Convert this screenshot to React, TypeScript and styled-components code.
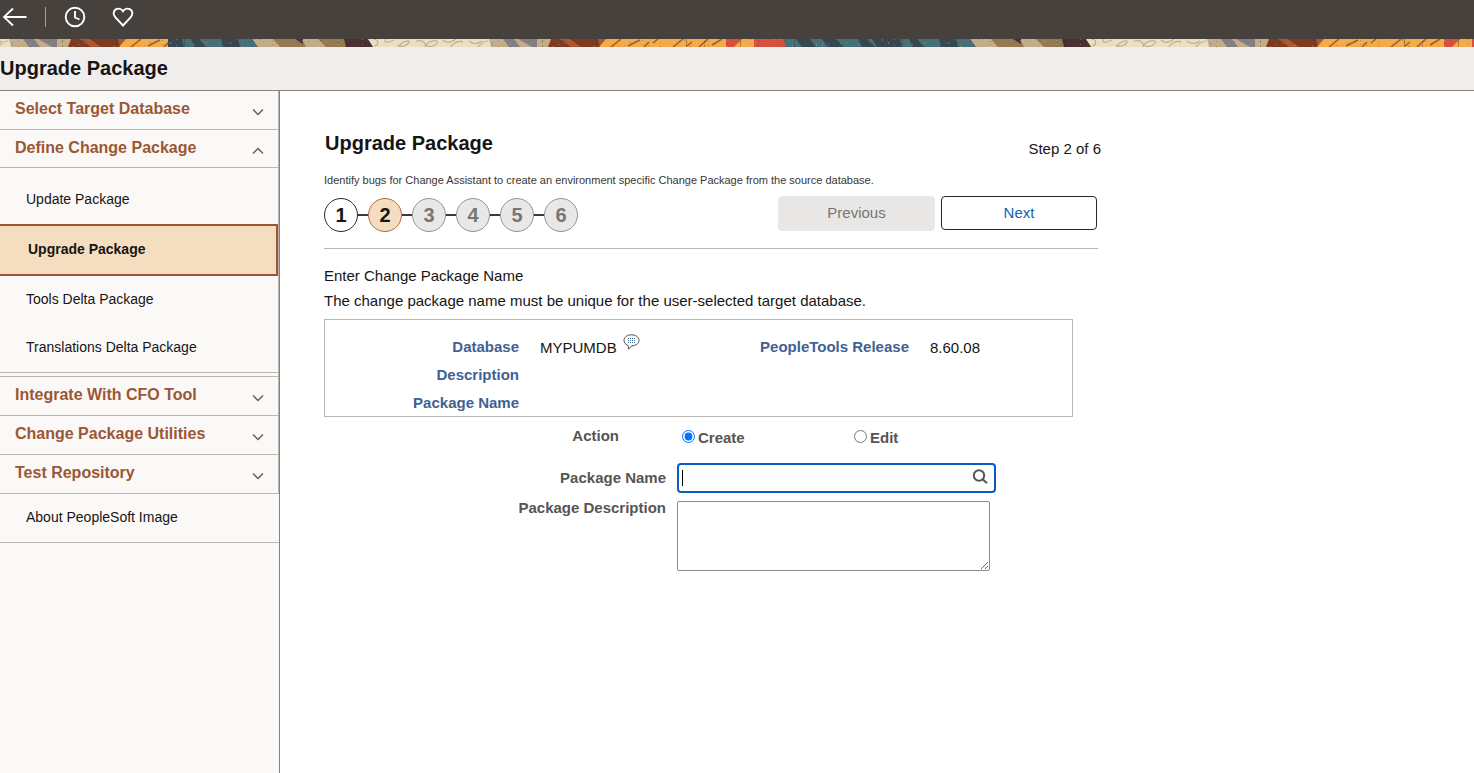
import React from "react";
import styled, { createGlobalStyle } from "styled-components";

const GlobalStyle = createGlobalStyle`
  *, *::before, *::after { box-sizing: border-box; }
  html, body, #root { min-height: 100vh; }
  body {
    margin: 0;
    background: #fff;
    color: #161513;
    font-family: "Liberation Sans", Arial, Helvetica, sans-serif;
    font-size: 15px;
  }
  h1, h2, p, ul, ol, dl, dd { margin: 0; padding: 0; }
  ul, ol { list-style: none; }
  button, input, textarea { font: inherit; }
`;

const Page = styled.div`
  display: flex;
  flex-direction: column;
  min-height: 100vh;
`;

const TopBar = styled.header`
  display: flex;
  align-items: center;
  height: 39px;
  padding: 0 2px 5px;
  background: #47413d;
`;

const IconButton = styled.button`
  display: flex;
  padding: 0;
  border: 0;
  background: none;
  color: #fff;
  cursor: pointer;
`;

const TopDivider = styled.span`
  width: 1px;
  height: 20px;
  margin: 0 18px;
  background: #a39e99;
`;

const TopIcons = styled.div`
  display: flex;
  gap: 26px;
`;

const Banner = styled.svg`
  display: block;
  width: 100%;
  height: 8px;
`;

const PageHeader = styled.div`
  height: 44px;
  border-bottom: 1px solid #8b8580;
  background: #f0eeec;
`;

const PageTitle = styled.h1`
  font-size: 20px;
  line-height: 43px;
`;

const Body = styled.div`
  display: flex;
  flex: 1;
`;

const Sidebar = styled.nav`
  flex: 0 0 280px;
  border-right: 1px solid #85817d;
  background: #fbf9f8;
`;

const Accordion = styled.ul`
  border-right: 1px solid #bcb6b1;
`;

const GroupButton = styled.button<{ $open?: boolean; $ruled?: boolean }>`
  display: flex;
  align-items: center;
  justify-content: space-between;
  width: 100%;
  height: ${(p) => (p.$open ? 38 : p.$ruled ? 40 : 39)}px;
  padding: 0 14px 0 15px;
  border: 0;
  border-top: ${(p) => (p.$ruled ? "1px solid #bcb6b1" : "0")};
  border-bottom: 1px solid #bcb6b1;
  background: none;
  color: #9b5733;
  font-size: 16px;
  font-weight: bold;
  line-height: 18px;
  cursor: pointer;

  span { padding-bottom: ${(p) => (p.$open ? 1 : 3)}px; }
  svg { margin-top: 4px; }
`;

const SubList = styled.ul`
  margin-bottom: 3px;
  padding-top: 8px;
  border-bottom: 1px solid #bcb6b1;
`;

const NavLink = styled.a<{ $active?: boolean }>`
  display: flex;
  align-items: center;
  height: ${(p) => (p.$active ? 52 : 48)}px;
  padding: 0 26px 2px;
  border: ${(p) => (p.$active ? "2px solid #9b5733" : "0")};
  border-left-width: 0;
  padding-left: ${(p) => (p.$active ? 28 : 26)}px;
  background: ${(p) => (p.$active ? "#f5debf" : "transparent")};
  color: #161513;
  font-size: 14px;
  font-weight: ${(p) => (p.$active ? "bold" : "normal")};
  text-decoration: none;
`;

const FooterItem = styled.div`
  border-bottom: 1px solid #bcb6b1;
`;

const Main = styled.main`
  flex: 1;
  min-width: 0;
  padding: 40px 44px;
`;

const Content = styled.div`
  max-width: 777px;
`;

const TitleRow = styled.div`
  display: flex;
  align-items: flex-end;
  justify-content: space-between;
  padding-bottom: 18px;
`;

const SectionTitle = styled.h2`
  padding-left: 1px;
  font-size: 20px;
  line-height: 24px;
`;

const StepCount = styled.p`
  line-height: 12px;
`;

const Description = styled.p`
  color: #3a3632;
  font-size: 11px;
  line-height: 14px;
`;

const WizardRow = styled.div`
  display: flex;
  align-items: flex-start;
  justify-content: space-between;
  max-width: 774px;
  padding: 9px 0 16px;
  border-bottom: 1px solid #bcb6b1;
`;

const Steps = styled.ol`
  display: flex;
  padding-top: 2px;
`;

const Step = styled.li`
  display: flex;
  align-items: center;

  & + &::before {
    content: "";
    width: 10px;
    height: 2px;
    background: #3f3a36;
  }
`;

type StepState = "done" | "current" | "future";
const stepColors: Record<StepState, [string, string, string]> = {
  done: ["#fff", "#2b2825", "#161513"],
  current: ["#f5debf", "#b06a4c", "#161513"],
  future: ["#e9e8e6", "#959390", "#787674"],
};

const StepCircle = styled.button<{ $state: StepState }>`
  width: 34px;
  height: 34px;
  padding: 0;
  border: 1px solid ${(p) => stepColors[p.$state][1]};
  border-radius: 50%;
  background: ${(p) => stepColors[p.$state][0]};
  color: ${(p) => stepColors[p.$state][2]};
  font-size: 20px;
  font-weight: bold;
  line-height: 32px;
`;

const WizardButtons = styled.div`
  display: flex;
  gap: 6px;
  padding-right: 1px;
`;

const WizardButton = styled.button<{ $primary?: boolean }>`
  width: ${(p) => (p.$primary ? 156 : 157)}px;
  height: ${(p) => (p.$primary ? 34 : 35)}px;
  padding: 0 0 2px;
  border: 1px solid ${(p) => (p.$primary ? "#2b2825" : "#e8e7e5")};
  border-radius: 4px;
  background: ${(p) => (p.$primary ? "#fff" : "#e8e7e5")};
  color: ${(p) => (p.$primary ? "#0d67ad" : "#767472")};
`;

const Intro = styled.div`
  padding: 14px 0 6px;
  line-height: 25px;
`;

const InfoBox = styled.dl`
  display: grid;
  grid-template-columns: 194px 199px 149px 1fr;
  grid-auto-rows: 28px;
  column-gap: 21px;
  align-items: center;
  max-width: 749px;
  padding-top: 12px;
  border: 1px solid #bcb6b1;
`;

const InfoLabel = styled.dt<{ $first?: boolean }>`
  grid-column-start: ${(p) => (p.$first ? 1 : "auto")};
  color: #3f6193;
  font-weight: bold;
  text-align: right;
  white-space: nowrap;
`;

const InfoValue = styled.dd`
  display: flex;
  align-items: center;
  gap: 6px;
  padding-top: 2px;
`;

const BubbleButton = styled(IconButton)`
  padding-bottom: 10px;
`;

const Form = styled.form`
  display: grid;
  grid-template-columns: 342px minmax(0, 319px);
  column-gap: 11px;
  row-gap: 8px;
  color: #575553;
  font-weight: bold;
`;

const FormLabel = styled.label`
  line-height: 30px;
  text-align: right;
`;

const TopLabel = styled(FormLabel)`
  line-height: 14px;
`;

const ActionLabel = styled.span`
  padding: 10px 47px 0 0;
  line-height: 18px;
  text-align: right;
`;

const RadioGroup = styled.div`
  display: grid;
  grid-template-columns: 172px 1fr;
  padding: 12px 0 8px 5px;
`;

const RadioLabel = styled.label`
  display: flex;
  align-items: flex-start;
  gap: 3px;
  line-height: 18px;

  input {
    width: 13px;
    height: 13px;
    margin: 1px 0 0;
  }
`;

const LookupField = styled.div`
  display: flex;
  align-items: center;
  height: 30px;
  padding: 0 6px 0 3px;
  border: 2px solid #0a5cc4;
  border-radius: 4px;
  background: #fff;
`;

const Caret = styled.span`
  width: 1px;
  height: 16px;
  background: #000;
`;

const LookupInput = styled.input`
  flex: 1;
  min-width: 0;
  height: 100%;
  padding: 0;
  border: 0;
  outline: 0;
  background: none;
  caret-color: transparent;
`;

const LookupButton = styled(IconButton)`
  padding-bottom: 2px;
  color: #575553;
`;

const DescriptionArea = styled.textarea`
  display: block;
  width: calc(100% - 6px);
  height: 70px;
  padding: 4px;
  border: 1px solid #8f8984;
  border-radius: 2px;
  outline: 0;
  resize: both;
`;

const BAND_WIDTH = 718;

const bandShapes: [string, string][] = [
  ["#c3ac88", "0,0 190,0 190,8 0,8"],
  ["#e9dfc2", "-2,0 119,0 121,8 3,8"],
  ["#837f86", "133,0 144,0 150,8 139,8"],
  ["#837f86", "148,0 167,0 167,8 162,8"],
  ["#7f3a22", "181,0 241,0 236,8 178,8"],
  ["#a9582f", "190,0 200,0 211,8 201,8"],
  ["#a9582f", "228,0 240,0 235,8 230,8"],
  ["#f3ab4a", "236,0 357,0 357,8 229,8"],
  ["#d94f3e", "356,0 416,0 420,8 356,8"],
  ["#f3ab4a", "372,0 384,0 384,8 364,8"],
  ["#37474f", "414,0 602,0 608,8 416,8"],
  ["#45707a", "414,0 426,0 432,8 416,8"],
  ["#45707a", "440,0 452,0 458,8 446,8"],
  ["#45707a", "466,0 488,0 492,8 474,8"],
  ["#45707a", "497,0 502,0 507,8 505,8"],
  ["#45707a", "530,0 539,0 543,8 532,8"],
  ["#45707a", "547,0 569,0 571,8 554,8"],
  ["#45707a", "586,0 599,0 606,8 588,8"],
  ["#c3ac88", "600,0 700,0 702,8 606,8"],
  ["#937a52", "621,0 650,0 654,8 628,8"],
  ["#937a52", "666,0 692,0 696,8 674,8"],
  ["#4c2f33", "643,0 651,0 651,5"],
  ["#4c2f33", "692,0 716,0 721,8 694,8"],
];

const bandSpecks = Array.from({ length: 250 }, (_, i) => ({
  x: 122 + ((i * i * 31 + i * 73) % 594),
  y: (i * 37 + (i >> 3)) % 8,
  dark: i % 3 !== 0,
}));

const BannerArt = () => (
  <Banner aria-hidden="true">
    <defs>
      <g id="band">
        {bandShapes.map(([fill, points], i) => (
          <polygon key={i} fill={fill} points={points} />
        ))}
        <g fill="none" stroke="#c5ad84" strokeWidth="1.2">
          <path d="M4 7C9 6 9 1 4 0M16 0q-4 6 8 1M29 8C30 3 40 0 39 3S31 9 28 6M46 2q8-2 10 5M55 8C57 1 70 0 67 4S58 9 55 5M73 1q5 5 13-1M81 8C83 3 95 0 92 4M99 2q6 5 13 0M108 8q5-6 10-6" />
        </g>
        <g fill="none" stroke="#a75b2c" strokeWidth="1.6">
          <path d="M241 8l10-8M258 7l12-6M274 8l5-5M288 0l-5 4M303 8l10-8M317 7l5-4M329 8l9-8M342 6l10-6" />
        </g>
        {bandSpecks.map((s, i) => (
          <rect
            key={i}
            x={s.x}
            y={s.y}
            width="1"
            height="1"
            fill={s.dark ? "#3b2a20" : "#f2d7a4"}
            opacity="0.32"
          />
        ))}
      </g>
      <clipPath id="leadClip">
        <rect width="168" height="8" />
      </clipPath>
    </defs>
    {[5, 4, 3, 2, 1, 0].map((n) => (
      <use key={n} href="#band" x={n * BAND_WIDTH - 348} />
    ))}
    <g clipPath="url(#leadClip)">
      <use href="#band" x={-110} />
    </g>
  </Banner>
);

const BackIcon = () => (
  <svg width="25" height="20" viewBox="0 0 25 20" fill="none" stroke="currentColor" strokeWidth="1.8">
    <path d="M24.500 10H2M11 1.500L2 10l9 8.500" />
  </svg>
);

const ClockIcon = () => (
  <svg width="22" height="22" viewBox="0 0 22 22" fill="none" stroke="currentColor" strokeWidth="1.900">
    <circle cx="11" cy="11" r="9.300" />
    <path d="M11 5v6.500l4.500 2" />
  </svg>
);

const HeartIcon = () => (
  <svg width="22" height="22" viewBox="0 0 22 22" fill="none" stroke="currentColor" strokeWidth="1.900">
    <path d="M11 19.500L3.200 11.200C.8 8.600 1.300 5 3.800 3.400 6.300 1.900 9.400 2.700 11 5.300c1.600-2.600 4.700-3.400 7.200-1.900 2.500 1.600 3 5.200.6 7.800z" />
  </svg>
);

const Chevron = ({ up }: { up?: boolean }) => (
  <svg width="12" height="8" viewBox="0 0 12 8" fill="none" stroke="#5e5b58" strokeWidth="1.400">
    <path d={up ? "M1 6.500l5-5 5 5" : "M1 1.500l5 5 5-5"} />
  </svg>
);

const BubbleIcon = () => (
  <svg width="17" height="16" viewBox="0 0 17 16" fill="none">
    <path
      d="M8.500.8c4.200 0 7.500 2.400 7.500 5.600s-3.300 5.400-7.300 5.400c-.8 1.400-2 2.600-3.400 3.200.3-1.300.2-2.600-.5-3.700C2.400 10.400 1 8.600 1 6.400 1 3.200 4.300.8 8.500.8z"
      stroke="#4b4845"
    />
    <path d="M5 4.500h7M5 6.500h8M5 8.500h7" stroke="#4a6fae" strokeDasharray="1 1" />
  </svg>
);

const SearchIcon = () => (
  <svg width="16" height="16" viewBox="0 0 16 16" fill="none" stroke="currentColor" strokeWidth="2">
    <circle cx="7" cy="6.500" r="5.200" />
    <path d="M10.700 10.300l4.300 4" />
  </svg>
);

const groups: { title: string; open?: boolean; ruled?: boolean; items?: string[] }[] = [
  { title: "Select Target Database" },
  {
    title: "Define Change Package",
    open: true,
    items: ["Update Package", "Upgrade Package", "Tools Delta Package", "Translations Delta Package"],
  },
  { title: "Integrate With CFO Tool", ruled: true },
  { title: "Change Package Utilities" },
  { title: "Test Repository" },
];

const CURRENT_ITEM = "Upgrade Package";
const CURRENT_STEP = 2;

const stepState = (n: number): StepState =>
  n < CURRENT_STEP ? "done" : n === CURRENT_STEP ? "current" : "future";

export default function App() {
  return (
    <Page>
      <GlobalStyle />
      <TopBar>
        <IconButton aria-label="Back"><BackIcon /></IconButton>
        <TopDivider />
        <TopIcons>
          <IconButton aria-label="Recently visited"><ClockIcon /></IconButton>
          <IconButton aria-label="Favorites"><HeartIcon /></IconButton>
        </TopIcons>
      </TopBar>
      <BannerArt />
      <PageHeader>
        <PageTitle>Upgrade Package</PageTitle>
      </PageHeader>
      <Body>
        <Sidebar>
          <Accordion>
            {groups.map((g) => (
              <li key={g.title}>
                <GroupButton $open={g.open} $ruled={g.ruled} aria-expanded={!!g.open}>
                  <span>{g.title}</span>
                  <Chevron up={g.open} />
                </GroupButton>
                {g.items && (
                  <SubList>
                    {g.items.map((item) => (
                      <li key={item}>
                        <NavLink href="#" $active={item === CURRENT_ITEM}>{item}</NavLink>
                      </li>
                    ))}
                  </SubList>
                )}
              </li>
            ))}
          </Accordion>
          <FooterItem>
            <NavLink href="#">About PeopleSoft Image</NavLink>
          </FooterItem>
        </Sidebar>
        <Main>
          <Content>
            <TitleRow>
              <SectionTitle>Upgrade Package</SectionTitle>
              <StepCount>Step 2 of 6</StepCount>
            </TitleRow>
            <Description>
              Identify bugs for Change Assistant to create an environment specific Change Package from the source database.
            </Description>
            <WizardRow>
              <Steps>
                {[1, 2, 3, 4, 5, 6].map((n) => (
                  <Step key={n}>
                    <StepCircle $state={stepState(n)}>{n}</StepCircle>
                  </Step>
                ))}
              </Steps>
              <WizardButtons>
                <WizardButton disabled>Previous</WizardButton>
                <WizardButton $primary>Next</WizardButton>
              </WizardButtons>
            </WizardRow>
            <Intro>
              <p>Enter Change Package Name</p>
              <p>The change package name must be unique for the user-selected target database.</p>
            </Intro>
            <InfoBox>
              <InfoLabel $first>Database</InfoLabel>
              <InfoValue>
                MYPUMDB
                <BubbleButton aria-label="Database comments"><BubbleIcon /></BubbleButton>
              </InfoValue>
              <InfoLabel>PeopleTools Release</InfoLabel>
              <InfoValue>8.60.08</InfoValue>
              <InfoLabel $first>Description</InfoLabel>
              <InfoLabel $first>Package Name</InfoLabel>
            </InfoBox>
            <Form onSubmit={(e) => e.preventDefault()}>
              <ActionLabel id="action-label">Action</ActionLabel>
              <RadioGroup role="radiogroup" aria-labelledby="action-label">
                <RadioLabel>
                  <input type="radio" name="action" defaultChecked />
                  Create
                </RadioLabel>
                <RadioLabel>
                  <input type="radio" name="action" />
                  Edit
                </RadioLabel>
              </RadioGroup>
              <FormLabel htmlFor="package-name">Package Name</FormLabel>
              <LookupField>
                <Caret />
                <LookupInput id="package-name" type="text" />
                <LookupButton type="button" aria-label="Look up package name"><SearchIcon /></LookupButton>
              </LookupField>
              <TopLabel htmlFor="package-description">Package Description</TopLabel>
              <DescriptionArea id="package-description" />
            </Form>
          </Content>
        </Main>
      </Body>
    </Page>
  );
}
